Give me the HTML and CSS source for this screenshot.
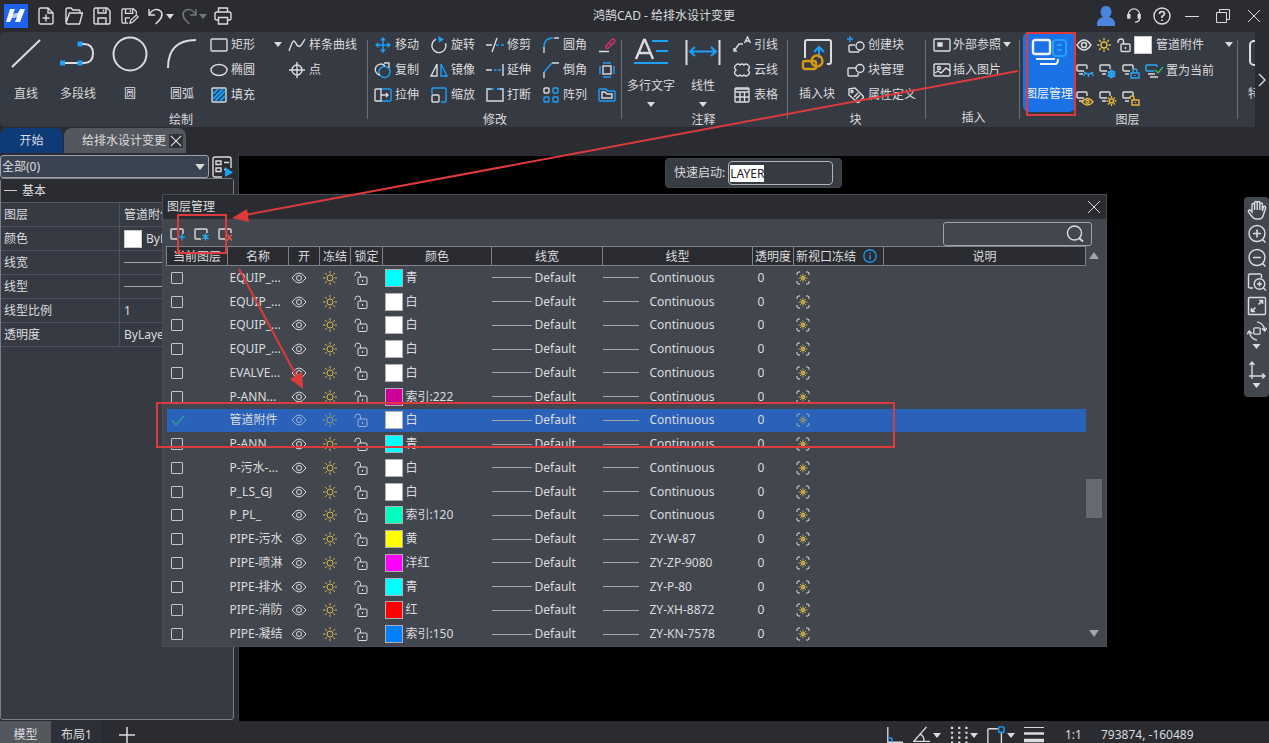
FILE: index.html
```html
<!DOCTYPE html>
<html lang="zh-CN">
<head>
<meta charset="utf-8">
<title>鸿鹄CAD - 给排水设计变更</title>
<link rel="stylesheet" href="styles.css">
</head>
<body>
<svg class="sprite" aria-hidden="true">
  <symbol id="caret" viewBox="0 0 8 5"><path d="M0 0h8L4 5z" fill="currentColor"/></symbol>
  <symbol id="caret-up" viewBox="0 0 10 7"><path d="M0 7h10L5 0z" fill="currentColor"/></symbol>
  <symbol id="close" viewBox="0 0 14 14"><path d="M1 1l12 12M13 1L1 13"/></symbol>
  <symbol id="new" viewBox="0 0 18 18"><path d="M11 1H3.500Q2 1 2 2.500v13Q2 17 3.500 17h11q1.500 0 1.500-1.500V6zM11 1v5h5M9 7.500v7M5.500 11h7"/></symbol>
  <symbol id="open" viewBox="0 0 18 18"><path d="M1 15V2.500Q1 1 2.500 1H6l2 2h6q1 0 1 1v2M1 16L4.500 6H17.500L14.500 17H2.500Q1 17 1 15.500"/></symbol>
  <symbol id="save" viewBox="0 0 18 18"><path d="M2.500 1H14l3 3v11.500q0 1.500-1.500 1.500h-13Q1 17 1 15.500v-13Q1 1 2.500 1zM5 1v5h8V1M5 17v-6h8v6M10.500 2.500v2"/></symbol>
  <symbol id="saveas" viewBox="0 0 20 18"><path d="M8 17H2.500Q1 17 1 15.500v-13Q1 1 2.500 1H14l3 3v3M5 1v5h8V1M5 17v-6h5M10.500 2.500v2M10 17l.7-3.300L17 8l2 2-6 6z"/></symbol>
  <symbol id="undo" viewBox="0 0 16 18"><path d="M1 2v6h6M1.500 7.500C4 2 10 1 13 4.500c3 4-.5 8-5.500 12.500"/></symbol>
  <symbol id="redo" viewBox="0 0 16 18"><path d="M15 2v6H9M14.500 7.500C12 2 6 1 3 4.500c-3 4 .5 8 5.500 12.500"/></symbol>
  <symbol id="print" viewBox="0 0 18 18"><path d="M4.500 5V1h9v4M4.500 13H2.500Q1 13 1 11.500V7q0-2 2-2h12q2 0 2 2v4.500q0 1.500-1.500 1.500h-2M4.500 10.500h9V17h-9z"/></symbol>
  <symbol id="user" viewBox="0 0 18 20"><path d="M9 0a5.500 6 0 0 1 3 11q5 1 6 6v3H0v-3q1-5 6-6A5.500 6 0 0 1 9 0z" fill="#4c86dc" stroke="none"/></symbol>
  <symbol id="headset" viewBox="0 0 16 17"><path d="M2 9V7a6 6 0 0 1 12 0v2M14 11q0 4-5 4"/><path d="M2.500 6.500v5M13.500 6.500v5" stroke-width="3.500"/></symbol>
  <symbol id="help" viewBox="0 0 18 18"><circle cx="9" cy="9" r="8"/><path d="M6.500 7q0-2.500 2.500-2.500T11.500 7Q11.500 8 9 9.500V11M9 12.500v1.500" stroke-width="1.700"/></symbol>
  <symbol id="min" viewBox="0 0 14 14"><path d="M0 7.500h14"/></symbol>
  <symbol id="restore" viewBox="0 0 14 14"><path d="M.5 3.500h10v10H.5zM3.500 3V.5h10v10H11"/></symbol>

  <symbol id="line" viewBox="0 0 36 36"><path d="M4 31L32 4" stroke-width="2"/></symbol>
  <symbol id="pline" viewBox="0 0 36 36"><path d="M3 27h21q9 0 9-9.500T24 8h-4" stroke-width="2"/><path d="M0 24.500h5v5H0zM17.500 24.500h5v5h-5zM17.500 5.500h5v5h-5z" fill="#1da0fa" stroke="none"/></symbol>
  <symbol id="circle" viewBox="0 0 36 36"><circle cx="18" cy="18" r="16.500" stroke-width="2"/></symbol>
  <symbol id="arc" viewBox="0 0 36 36"><path d="M4 32Q4 4 32 4" stroke-width="2"/></symbol>
  <symbol id="rect" viewBox="0 0 18 18"><rect x="1" y="3" width="16" height="12" rx="1"/></symbol>
  <symbol id="ellipse" viewBox="0 0 18 18"><ellipse cx="9" cy="9" rx="8" ry="5.500"/></symbol>
  <symbol id="hatch" viewBox="0 0 18 18"><rect x="2" y="2" width="14" height="14" rx="1" fill="#25415b"/><path d="M3 8l5-5M3 13L13 3M5 15L15 5M10 15l5-5" stroke="#1da0fa" stroke-width="1.800"/></symbol>
  <symbol id="spline" viewBox="0 0 18 18"><path d="M1 15C6 0 6 5 9 9s5-1 8-6"/></symbol>
  <symbol id="point" viewBox="0 0 18 18"><circle cx="9" cy="9" r="5"/><path d="M9 1v16M1 9h16"/></symbol>
  <symbol id="move" viewBox="0 0 18 18"><g stroke="#1da0fa" fill="#1da0fa"><path d="M9 3v12M3 9h12"/><path d="M9 1L6 4.500h6zM9 17l-3-3.500h6zM1 9l3.500-3v6zM17 9l-3.500-3v6z" stroke="none"/></g></symbol>
  <symbol id="rotate" viewBox="0 0 18 18"><path d="M6 3.200a7 7 0 1 0 9.500 4"/><path d="M8 0l6 3.500-5 3z" fill="#1da0fa" stroke="none"/></symbol>
  <symbol id="trim" viewBox="0 0 18 18"><path d="M0 9h6M11 2L6 16"/><path d="M10 9h3M15 9h3" stroke="#1da0fa"/></symbol>
  <symbol id="fillet" viewBox="0 0 18 18"><path d="M2 17v-6M12 2h5"/><path d="M2 11q0-9 9-9" stroke="#1da0fa"/></symbol>
  <symbol id="erase" viewBox="0 0 18 18"><path d="M1 15.500h10"/><path d="M8 10l6-6.500q1-1 2 0l.5.500q1 1 0 2L10.500 12q-1 1-2 0l-.5-.5q-.5-.5 0-1.500zM11 7l3 2.500" stroke="#d6336c"/></symbol>
  <symbol id="copy" viewBox="0 0 18 18"><circle cx="10.500" cy="11" r="5.500" stroke="#1da0fa"/><path d="M6 14A5.500 5.500 0 1 1 11 5M10 2h5v5"/></symbol>
  <symbol id="mirror" viewBox="0 0 18 18"><path d="M7 3v12H1z"/><path d="M11 3v12h6z" stroke="#1da0fa"/></symbol>
  <symbol id="extend" viewBox="0 0 18 18"><path d="M0 9h6M17 3v12"/><path d="M8 9h2.500M12 9h3" stroke="#1da0fa"/></symbol>
  <symbol id="chamfer" viewBox="0 0 18 18"><path d="M2 17v-6M10 2h7"/><path d="M2 11l8-9" stroke="#1da0fa"/></symbol>
  <symbol id="offset" viewBox="0 0 18 18"><rect x="5" y="5" width="8" height="8"/><path d="M5 2h8M5 16h8M2 5v8M16 5v8" stroke="#1da0fa"/></symbol>
  <symbol id="stretch" viewBox="0 0 18 18"><path d="M7 3h9q1 0 1 1v10q0 1-1 1H7" stroke="#1da0fa"/><path d="M7 3v12H2q-1 0-1-1V4q0-1 1-1zM7 9h7M12 7l2 2-2 2"/></symbol>
  <symbol id="scale" viewBox="0 0 18 18"><path d="M2 8V3q0-1 1-1h12q1 0 1 1v12q0 1-1 1h-4" stroke="#1da0fa"/><rect x="2" y="9" width="7" height="7" rx="1"/></symbol>
  <symbol id="break" viewBox="0 0 18 18"><path d="M5 3H1v12h16V3h-3"/><path d="M5 3h2.500M11 3h3" stroke="#1da0fa" stroke-width="2"/></symbol>
  <symbol id="array" viewBox="0 0 18 18"><rect x="2" y="2" width="5" height="5" rx="1"/><g stroke="#1da0fa"><rect x="11" y="2" width="5" height="5" rx="1"/><rect x="2" y="11" width="5" height="5" rx="1"/><rect x="11" y="11" width="5" height="5" rx="1"/></g></symbol>
  <symbol id="region" viewBox="0 0 18 18"><path d="M2 3h6l2 2h6q1 0 1 1v8q0 1-1 1H2q-1 0-1-1V4q0-1 1-1z" stroke="#1da0fa"/><path d="M4 6h3l2 2h5v4H4z"/></symbol>
  <symbol id="mtext" viewBox="0 0 36 36"><path d="M3 23L11 4h1l8 19M6 17h11" stroke-width="2.400"/><path d="M19 5h16M23 15h12M1 27h34" stroke="#1da0fa" stroke-width="2"/></symbol>
  <symbol id="dim" viewBox="0 0 36 36"><path d="M1.500 4v25M34.500 4v25" stroke-width="2"/><path d="M6 15.500h24M10 11l-5 4.500 5 4.500M26 11l5 4.500-5 4.500" stroke="#1da0fa" stroke-width="2"/></symbol>
  <symbol id="leader" viewBox="0 0 18 18"><path d="M1 15l5-7h4M11.500 7L14.500 1l3 6M12.500 5h4M1 12v3h3"/></symbol>
  <symbol id="cloud" viewBox="0 0 18 18"><path d="M3 4q2-2 4 0 2-2 4 0 2-2 4 0 3 2 0 5 3 3 0 5-2 2-4 0-2 2-4 0-2 2-4 0-3-2 0-5-3-3 0-5z"/></symbol>
  <symbol id="table" viewBox="0 0 18 18"><rect x="2" y="2" width="14" height="14" rx="1"/><path d="M2 6h14M2 11h14M7 6v10M11.500 6v10M2 3h14"/></symbol>
  <symbol id="insblock" viewBox="0 0 36 36"><path d="M6 22V6q0-2 2-2h22q2 0 2 2v20q0 2-2 2h-2" stroke-width="2"/><path d="M20 22V12M15 16l5-5 5 5" stroke="#1da0fa" stroke-width="2"/><g stroke="#d49a12" stroke-width="2.400"><rect x="4" y="25" width="13" height="8" rx="2"/><circle cx="18" cy="25" r="5.500"/></g></symbol>
  <symbol id="mkblock" viewBox="0 0 18 18"><path d="M8 9H3q-1 0-1 1v5q0 1 1 1h8q1 0 1-1v-1"/><circle cx="13" cy="10" r="4"/><path d="M3 0v6M0 3h6" stroke="#1da0fa"/></symbol>
  <symbol id="block" viewBox="0 0 18 18"><path d="M9 7H2Q1 7 1 8v6q0 1 1 1h8q1 0 1-1v-2"/><circle cx="13" cy="7.500" r="4"/></symbol>
  <symbol id="tag" viewBox="0 0 18 18"><path d="M2 3l6-1 8 8q1 1 0 2l-4 4q-1 1-2 0L2 9zM7 11l4-4M9 13l4-4"/><circle cx="5" cy="5.500" r="1"/></symbol>
  <symbol id="xref" viewBox="0 0 18 18"><rect x="1" y="3" width="16" height="12" rx="1"/><path d="M5 7h4v3H5z" fill="currentColor"/></symbol>
  <symbol id="image" viewBox="0 0 18 18"><rect x="1" y="3" width="16" height="12" rx="1"/><circle cx="6" cy="7" r="1.500"/><path d="M2 12l3-2 3 2 5-5 4 3"/></symbol>
  <symbol id="layers" viewBox="0 0 36 36"><rect x="2" y="4" width="17" height="14" rx="2" stroke-width="2.400"/><path d="M5 23h19M9 28h16q2-1 2-5" stroke-width="2"/><rect x="22" y="4" width="13" height="16" rx="3" stroke="#22a2ff" stroke-width="2"/><path d="M26 9h5M26 14h5" stroke="#22a2ff" stroke-width="2"/></symbol>
  <symbol id="prop-card" viewBox="0 0 36 36"><rect x="2" y="5" width="30" height="24" rx="4" stroke-width="2"/></symbol>
  <symbol id="eye" viewBox="0 0 16 16"><path d="M1 8q7-10 14 0-7 10-14 0z"/><circle cx="8" cy="8" r="2.500"/></symbol>
  <symbol id="sun" viewBox="0 0 16 16"><circle cx="8" cy="8" r="3"/><path d="M8 1v2.500M8 12.500V15M1 8h2.500M12.500 8H15M3 3l1.800 1.800M11.200 11.200L13 13M3 13l1.800-1.800M11.200 4.800L13 3"/></symbol>
  <symbol id="unlock" viewBox="0 0 16 16"><rect x="5" y="7" width="9" height="7.500" rx="1"/><path d="M7.500 7V4.500Q7.500 2 5 2T2 4.500V6M9.500 10v2"/></symbol>
  <symbol id="lyr" viewBox="0 0 18 18"><path d="M8 9H2Q1 9 1 8V4q0-1 1-1h8q1 0 1 1v3M3 12h4"/></symbol>
  <symbol id="lyr-hide" viewBox="0 0 18 18"><use href="#lyr"/><path d="M8 10q5 4 9 0M9 11.500L7.500 14M12.500 12v3M16 11.500l1.500 2.500" stroke="#29a9f5"/></symbol>
  <symbol id="lyr-freeze" viewBox="0 0 18 18"><use href="#lyr"/><path d="M12.500 7.500v9M8.500 9.700l8 4.600M8.500 14.300l8-4.600" stroke="#29a9f5"/><circle cx="12.500" cy="12" r="3" stroke="#29a9f5"/></symbol>
  <symbol id="lyr-lock" viewBox="0 0 18 18"><use href="#lyr"/><path d="M9 11h8v5H9zM11 11V9q0-2 2-2t2 2v2M13 13v1" stroke="#29a9f5"/></symbol>
  <symbol id="lyr-set" viewBox="0 0 18 18"><path d="M3 12h7M5 15h8"/><path d="M9 9H2Q1 9 1 8V4q0-1 1-1h9q1 0 1 1v1" stroke="#29a9f5"/><path d="M10 8l3 3 5-6" stroke="#2fc45b"/></symbol>
  <symbol id="lyr-show" viewBox="0 0 18 18"><use href="#lyr"/><path d="M6 13q5.500-7 11 0-5.500 6-11 0z" stroke="#e2b93b"/><circle cx="11.500" cy="12.800" r="1.500" stroke="#e2b93b"/></symbol>
  <symbol id="lyr-thaw" viewBox="0 0 18 18"><use href="#lyr"/><g stroke="#e2b93b"><circle cx="12.500" cy="12" r="2"/><path d="M12.500 7v2M12.500 15v2M7.500 12h2M15.500 12h2M9 8.500l1.500 1.500M16 15.500L14.500 14M16 8.500L14.500 10M9 15.500l1.500-1.500"/></g></symbol>
  <symbol id="lyr-unlock" viewBox="0 0 18 18"><use href="#lyr"/><path d="M10 11h7v5h-7zM12 11V9q0-2-2-2T8 9v1M13.500 13v1" stroke="#e2b93b"/></symbol>
  <symbol id="props" viewBox="0 0 22 22"><path d="M10 21H3q-2 0-2-2V3q0-2 2-2h14q2 0 2 2v9" stroke-width="1.400"/><path d="M4 5h5v3.500H4zM4 12h5v3.500H4zM12 6.500h5M12 13.500h2"/><path d="M13 11l8 5.500-8 4.500z" fill="#1da0fa" stroke="none"/></symbol>
  <symbol id="tl-new" viewBox="0 0 16 16"><path d="M8 13H3q-1 0-1-1V4q0-1 1-1h10q1 0 1 1v4"/><path d="M13 7.500v7M9.500 11h7" stroke="#1da0fa" stroke-width="1.400"/></symbol>
  <symbol id="tl-frz" viewBox="0 0 16 16"><path d="M8 13H3q-1 0-1-1V4q0-1 1-1h10q1 0 1 1v3"/><path d="M12.500 7.500v7M9.500 9l6 4M15.500 9l-6 4" stroke="#29b0f5"/></symbol>
  <symbol id="tl-del" viewBox="0 0 16 16"><path d="M8 13H3q-1 0-1-1V4q0-1 1-1h10q1 0 1 1v3"/><path d="M10 8.500l5 6M15 8.500l-5 6" stroke="#d9634c"/></symbol>
  <symbol id="search" viewBox="0 0 18 18"><circle cx="8.500" cy="8" r="7"/><path d="M13 13l4 3.500" stroke-width="1.800"/></symbol>
  <symbol id="info" viewBox="0 0 14 14"><circle cx="7" cy="7" r="6.200" stroke="#1f93e0"/><path d="M7 6v4.500M7 3.500V5" stroke="#1f93e0" stroke-width="1.400"/></symbol>
  <symbol id="check" viewBox="0 0 14 14"><path d="M1 7l4 5 8-9" stroke="#2f9f8d" stroke-width="1.300"/></symbol>
  <symbol id="vp" viewBox="0 0 14 14"><path d="M4 1H2L1 2v2M10 1h2l1 1v2M4 13H2l-1-1v-2M10 13h2l1-1v-2"/><g stroke="#c0a446"><circle cx="7" cy="7" r="1.800"/><path d="M7 2.500v9M2.500 7h9M4 4l6 6M10 4l-6 6"/></g></symbol>
  <symbol id="hand" viewBox="0 0 20 20"><path d="M5 12V5q0-1.500 1.300-1.500T7.600 5v5V3q0-1.500 1.300-1.500T10.200 3v7V3q0-1.500 1.300-1.500T12.800 3v7V4.500Q12.800 3 14.100 3t1.300 1.500V11l1-4q.6-1 1.800-.5.800.5.300 2L16 16q-1 3-4 3H9q-2 0-4-2.500L1.500 12Q1 10.500 2.200 10q1-.2 2 1z" stroke-width="1.400"/></symbol>
  <symbol id="zin" viewBox="0 0 20 20"><circle cx="10" cy="9.500" r="8"/><path d="M15.500 15.500l3 3M10 5.500v8M6 9.500h8" stroke-width="1.600"/></symbol>
  <symbol id="zout" viewBox="0 0 20 20"><circle cx="10" cy="9.500" r="8"/><path d="M15.500 15.500l3 3M6 9.500h8" stroke-width="1.600"/></symbol>
  <symbol id="zwin" viewBox="0 0 20 20"><path d="M6 16H3q-1.500 0-1.500-1.500v-11Q1.500 2 3 2h10q1.500 0 1.500 1.500V6"/><circle cx="12.500" cy="12" r="5.300"/><path d="M16.500 16l2.500 2.500M12.500 9.500v5M10 12h5" stroke-width="1.400"/></symbol>
  <symbol id="zext" viewBox="0 0 20 20"><rect x="1.500" y="1.500" width="17" height="17" rx="1"/><path d="M11.500 8.500l4-4M12 4.500h3.500V8M8.500 11.500l-4 4M4.500 12v3.500H8" stroke-width="1.600"/></symbol>
  <symbol id="orbit" viewBox="0 0 22 22"><rect x="7.500" y="7.500" width="7" height="7" rx="1"/><path d="M11 1q7 1 8.500 9M16.500 8l3 3 2.500-3.500M11 21Q4 20 2.500 12M0 14.500L2.500 11l3.500 3" stroke-width="1.500"/></symbol>
  <symbol id="ucs" viewBox="0 0 20 20"><path d="M5 2v14h13M2.500 5L5 2l2.500 3M15 13.500l3 2.500-3 2.500M5 13v6M2 16h3" stroke-width="1.400"/></symbol>
  <symbol id="ortho" viewBox="0 0 20 20"><path d="M2 1v17h17" stroke-width="1.500"/><path d="M2.500 13.500h4V18" stroke="#1da0fa" stroke-width="1.600"/></symbol>
  <symbol id="polar" viewBox="0 0 20 20"><path d="M15 1L1 17h18M8 9q5 3 4 8" stroke-width="1.500"/></symbol>
  <symbol id="grid" viewBox="0 0 20 20"><path d="M1 2h2.500M9 2h2.500M17 2h2.500M1 7.500h2.500M9 7.500h2.500M17 7.500h2.500M1 13h2.500M9 13h2.500M17 13h2.500M1 18.500h2.500M9 18.500h2.500M17 18.500h2.500" stroke-width="2.400"/></symbol>
  <symbol id="osnap" viewBox="0 0 20 20"><path d="M1 19V4q0-1 1-1h10M16 7v12" stroke-width="1.500"/><rect x="13" y="1" width="6" height="6" rx="1" stroke="#1da0fa" stroke-width="1.600"/></symbol>
  <symbol id="weight" viewBox="0 0 20 20"><path d="M0 2.500h20" stroke-width="1"/><path d="M0 8.500h20" stroke-width="2.500"/><path d="M0 15.500h20" stroke-width="3.500"/></symbol>
  <symbol id="plus" viewBox="0 0 16 16"><path d="M8 0v16M0 8h16" stroke-width="1.500"/></symbol>
</svg>

<header class="titlebar">
  <nav class="quick" aria-label="快速访问">
    <svg class="logo" viewBox="0 0 24 24" role="img" aria-label="鸿鹄CAD"><rect width="24" height="24" fill="#1d63f0"/><path d="M6 5h5l-2 5 5-1 2-4h5l-5 13h-5l2-5-5 1-2 4H2z" fill="#fff"/><path d="M9 10l5-1-1 4-5 1z" fill="#a9cbff"/></svg>
    <button aria-label="新建"><svg><use href="#new"/></svg></button>
    <button aria-label="打开"><svg><use href="#open"/></svg></button>
    <button aria-label="保存"><svg><use href="#save"/></svg></button>
    <button aria-label="另存为"><svg><use href="#saveas"/></svg></button>
    <button class="split" aria-label="撤销"><svg><use href="#undo"/></svg><svg class="caret"><use href="#caret"/></svg></button>
    <button class="split off" aria-label="重做"><svg><use href="#redo"/></svg><svg class="caret"><use href="#caret"/></svg></button>
    <button class="narrow" aria-label="打印"><svg><use href="#print"/></svg></button>
  </nav>
  <h1>鸿鹄CAD - 给排水设计变更</h1>
  <div class="window-tools">
    <button class="narrow" aria-label="用户"><svg class="person"><use href="#user"/></svg></button>
    <button class="narrow" aria-label="客服"><svg class="ic16"><use href="#headset"/></svg></button>
    <button class="narrow" aria-label="帮助"><svg><use href="#help"/></svg></button>
    <button aria-label="最小化"><svg class="ic14"><use href="#min"/></svg></button>
    <button aria-label="还原"><svg class="ic14"><use href="#restore"/></svg></button>
    <button aria-label="关闭"><svg class="ic14"><use href="#close"/></svg></button>
  </div>
</header>

<section class="ribbon">
  <div class="group draw">
    <div class="tools">
      <button class="large"><svg><use href="#line"/></svg><span>直线</span></button>
      <button class="large"><svg><use href="#pline"/></svg><span>多段线</span></button>
      <button class="large"><svg><use href="#circle"/></svg><span>圆</span></button>
      <button class="large"><svg><use href="#arc"/></svg><span>圆弧</span></button>
      <div class="stack wide">
        <button class="small spread"><svg><use href="#rect"/></svg>矩形<svg class="caret"><use href="#caret"/></svg></button>
        <button class="small"><svg><use href="#ellipse"/></svg>椭圆</button>
        <button class="small"><svg><use href="#hatch"/></svg>填充</button>
      </div>
      <div class="stack">
        <button class="small"><svg><use href="#spline"/></svg>样条曲线</button>
        <button class="small"><svg><use href="#point"/></svg>点</button>
      </div>
    </div>
    <h2>绘制</h2>
  </div>
  <div class="group modify">
    <div class="tools">
      <div class="stack col"><button class="small"><svg><use href="#move"/></svg>移动</button><button class="small"><svg><use href="#copy"/></svg>复制</button><button class="small"><svg><use href="#stretch"/></svg>拉伸</button></div>
      <div class="stack col"><button class="small"><svg><use href="#rotate"/></svg>旋转</button><button class="small"><svg><use href="#mirror"/></svg>镜像</button><button class="small"><svg><use href="#scale"/></svg>缩放</button></div>
      <div class="stack col"><button class="small"><svg><use href="#trim"/></svg>修剪</button><button class="small"><svg><use href="#extend"/></svg>延伸</button><button class="small"><svg><use href="#break"/></svg>打断</button></div>
      <div class="stack col"><button class="small"><svg><use href="#fillet"/></svg>圆角</button><button class="small"><svg><use href="#chamfer"/></svg>倒角</button><button class="small"><svg><use href="#array"/></svg>阵列</button></div>
      <div class="stack"><button class="small" aria-label="删除"><svg><use href="#erase"/></svg></button><button class="small" aria-label="偏移"><svg><use href="#offset"/></svg></button><button class="small" aria-label="面域"><svg><use href="#region"/></svg></button></div>
    </div>
    <h2>修改</h2>
  </div>
  <div class="group annotate">
    <div class="tools">
      <button class="large drop"><svg><use href="#mtext"/></svg><span>多行文字</span><svg class="caret"><use href="#caret"/></svg></button>
      <button class="large drop"><svg><use href="#dim"/></svg><span>线性</span><svg class="caret"><use href="#caret"/></svg></button>
      <div class="stack"><button class="small"><svg><use href="#leader"/></svg>引线</button><button class="small"><svg><use href="#cloud"/></svg>云线</button><button class="small"><svg><use href="#table"/></svg>表格</button></div>
    </div>
    <h2>注释</h2>
  </div>
  <div class="group blocks">
    <div class="tools">
      <button class="large"><svg><use href="#insblock"/></svg><span>插入块</span></button>
      <div class="stack"><button class="small"><svg><use href="#mkblock"/></svg>创建块</button><button class="small"><svg><use href="#block"/></svg>块管理</button><button class="small"><svg><use href="#tag"/></svg>属性定义</button></div>
    </div>
    <h2>块</h2>
  </div>
  <div class="group insert">
    <div class="tools">
      <div class="stack"><button class="small"><svg><use href="#xref"/></svg>外部参照<svg class="caret"><use href="#caret"/></svg></button><button class="small"><svg><use href="#image"/></svg>插入图片</button></div>
    </div>
    <h2>插入</h2>
  </div>
  <div class="group layer">
    <div class="tools">
      <button class="large active"><svg><use href="#layers"/></svg><span>图层管理</span></button>
      <div class="layer-rows">
        <button class="layer-pick"><svg class="ic16"><use href="#eye"/></svg><svg class="ic16 gold"><use href="#sun"/></svg><svg class="ic16"><use href="#unlock"/></svg><i class="swatch"></i><span>管道附件</span><svg class="caret"><use href="#caret"/></svg></button>
        <div class="icon-row"><button aria-label="隐藏图层"><svg><use href="#lyr-hide"/></svg></button><button aria-label="冻结图层"><svg><use href="#lyr-freeze"/></svg></button><button aria-label="锁定图层"><svg><use href="#lyr-lock"/></svg></button><button class="small"><svg><use href="#lyr-set"/></svg>置为当前</button></div>
        <div class="icon-row"><button aria-label="显示图层"><svg><use href="#lyr-show"/></svg></button><button aria-label="解冻图层"><svg><use href="#lyr-thaw"/></svg></button><button aria-label="解锁图层"><svg><use href="#lyr-unlock"/></svg></button></div>
      </div>
    </div>
    <h2>图层</h2>
  </div>
  <div class="group more">
    <button class="large"><svg><use href="#prop-card"/></svg><span>特</span></button>
  </div>
  <button class="ribbon-next" aria-label="更多"><svg viewBox="0 0 8 14"><path d="M1 1l6 6-6 6"/></svg></button>
</section>

<nav class="doc-tabs">
  <button class="home">开始</button>
  <button class="doc">给排水设计变更<span class="x"><svg><use href="#close"/></svg></span></button>
</nav>

<main>
  <aside class="props">
    <div class="picker">
      <label class="select"><select aria-label="选择对象"><option>全部(0)</option></select><svg class="caret"><use href="#caret"/></svg></label>
      <button aria-label="快速选择"><svg><use href="#props"/></svg></button>
    </div>
    <section class="sheet">
      <h3><span class="dash"></span>基本</h3>
      <dl>
        <dt>图层</dt><dd>管道附件</dd>
        <dt>颜色</dt><dd><i class="swatch"></i>ByLayer</dd>
        <dt>线宽</dt><dd><span class="rule"></span></dd>
        <dt>线型</dt><dd><span class="rule"></span></dd>
        <dt>线型比例</dt><dd>1</dd>
        <dt>透明度</dt><dd>ByLayer</dd>
      </dl>
    </section>
  </aside>
  <div class="canvas">
    <div class="launch"><label for="cmd">快速启动:</label><input id="cmd" type="text" value="LAYER"></div>
    <div class="viewbar">
      <button aria-label="平移"><svg><use href="#hand"/></svg></button>
      <button aria-label="放大"><svg><use href="#zin"/></svg></button>
      <button aria-label="缩小"><svg><use href="#zout"/></svg></button>
      <button aria-label="窗口缩放"><svg><use href="#zwin"/></svg></button>
      <button aria-label="范围缩放"><svg><use href="#zext"/></svg></button>
      <button class="tall" aria-label="动态观察"><svg><use href="#orbit"/></svg><svg class="caret"><use href="#caret"/></svg></button>
      <button class="tall" aria-label="坐标系"><svg><use href="#ucs"/></svg><svg class="caret"><use href="#caret"/></svg></button>
    </div>
  </div>
</main>

<section class="dialog" role="dialog" aria-labelledby="dlg-title">
  <header><h2 id="dlg-title">图层管理</h2><button aria-label="关闭"><svg class="ic14"><use href="#close"/></svg></button></header>
  <div class="dialog-tools">
    <button aria-label="新建图层"><svg class="ic16"><use href="#tl-new"/></svg></button>
    <button aria-label="新建冻结图层"><svg class="ic16"><use href="#tl-frz"/></svg></button>
    <button aria-label="删除图层"><svg class="ic16"><use href="#tl-del"/></svg></button>
    <div class="find"><input type="text" aria-label="搜索图层"><svg><use href="#search"/></svg></div>
  </div>
  <div class="dialog-body">
    <table>
      <colgroup><col class="w61"><col class="w61"><col class="w31"><col class="w31"><col class="w32"><col class="w109"><col class="w111"><col class="w150"><col class="w41"><col class="w90"><col></colgroup>
      <thead><tr><th>当前图层</th><th>名称</th><th>开</th><th>冻结</th><th>锁定</th><th>颜色</th><th>线宽</th><th>线型</th><th>透明度</th><th><span class="with-info">新视口冻结<svg><use href="#info"/></svg></span></th><th>说明</th></tr></thead>
      <tbody id="rows"></tbody>
    </table>
    <div class="scroll"><svg><use href="#caret-up"/></svg><span class="before"></span><span class="thumb"></span><span class="after"></span><svg class="down"><use href="#caret-up"/></svg></div>
  </div>
</section>

<footer class="status">
  <button class="sheet-tab on">模型</button>
  <button class="sheet-tab">布局1</button>
  <button class="add" aria-label="新建布局"><svg class="ic16"><use href="#plus"/></svg></button>
  <div class="modes">
    <button aria-label="正交"><svg><use href="#ortho"/></svg></button>
    <button aria-label="极轴"><svg><use href="#polar"/></svg><svg class="caret"><use href="#caret"/></svg></button>
    <button aria-label="栅格"><svg><use href="#grid"/></svg><svg class="caret"><use href="#caret"/></svg></button>
    <button aria-label="对象捕捉"><svg><use href="#osnap"/></svg><svg class="caret"><use href="#caret"/></svg></button>
    <button aria-label="线宽"><svg class="ic20"><use href="#weight"/></svg></button>
  </div>
  <span class="ratio">1:1</span>
  <span class="coords">793874, -160489</span>
</footer>

<svg class="marks" aria-hidden="true">
  <rect x="1027" y="33" width="48" height="82"/>
  <rect x="178" y="215" width="48" height="38"/>
  <rect x="157" y="403" width="737" height="44"/>
  <path d="M1018 71L245 215M239 269l58 108"/>
  <path class="head" d="M232 218l15-9 2 13zM303 389l-13-10 12-7z"/>
</svg>
<script src="script.js"></script>
</body>
</html>
```

FILE: styles.css
```css
* { box-sizing: border-box; }
body {
  margin: 0;
  height: 100vh;
  display: flex;
  flex-direction: column;
  overflow: hidden;
  background: #2a2c32;
  color: #dcdcde;
  font: 12px/16px "Noto Sans", "Noto Sans CJK SC", sans-serif;
}
button, input, select { font: inherit; color: inherit; }
button { background: none; border: 0; padding: 0; display: flex; align-items: center; justify-content: center; white-space: nowrap; }
h1, h2, h3, dl, dd { margin: 0; font-size: 12px; font-weight: 400; }
svg { width: 18px; height: 18px; flex: none; fill: none; stroke: currentColor; stroke-width: 1.4; display: block; }
.sprite { position: absolute; width: 0; height: 0; }
svg.caret { width: 8px; height: 5px; stroke: none; }
svg.ic16 { width: 16px; height: 16px; }
svg.ic14 { width: 14px; height: 14px; stroke-width: 1; }
.gold { color: #e0b84a; }
.swatch { width: 18px; height: 18px; flex: none; background: #fff; border: 1px solid #c9c9c9; }

/* Title bar */
.titlebar { display: flex; align-items: center; height: 32px; flex: none; }
.quick { display: flex; align-items: center; padding-left: 4px; }
.quick .logo { width: 24px; height: 24px; margin-right: 4px; stroke: none; }
.quick button { width: 28px; height: 28px; }
.quick .split { width: 33px; gap: 1px; }
.quick .narrow { width: 26px; }
.quick .off { color: #74767b; }
.titlebar h1 { flex: 1; text-align: center; }
.window-tools { display: flex; }
.window-tools button { width: 31px; height: 28px; }
.window-tools .narrow { width: 28px; }
.window-tools .person { height: 20px; }

/* Ribbon */
.ribbon { display: flex; flex: none; height: 95px; background: #363a43; border-radius: 6px 0 0 6px; overflow: hidden; }
.group { display: flex; flex-direction: column; position: relative; flex: none; }
.group:not(.more)::after { content: ""; position: absolute; right: 0; top: 8px; bottom: 8px; width: 1px; background: #6b6e75; }
.group h2 { text-align: center; margin-top: 4px; padding-right: 6px; line-height: 18px; }
.tools { display: flex; height: 75px; }
.draw { width: 368px; }
.modify { width: 254px; padding-left: 6px; }
.annotate { width: 166px; padding-left: 3px; }
.blocks { width: 138px; padding-left: 3px; }
.insert { width: 94px; padding-left: 7px; }
.layer { width: 218px; padding-left: 3px; }
.more { width: 17px; overflow: hidden; padding-left: 10px; }
.large { width: 52px; height: 75px; flex-direction: column; justify-content: flex-start; padding-top: 4px; }
.large svg { width: 36px; height: 36px; }
.large span { margin-top: 14px; }
.large.drop span { margin-top: 6px; }
.drop svg.caret { margin-top: 8px; width: 10px; height: 5px; }
.draw .stack { margin-left: 2px; }
.annotate .stack, .blocks .stack { margin-left: 4px; }
.stack { display: grid; grid-auto-rows: 25px; align-content: start; }
.stack.wide { width: 76px; }
.stack.col { width: 56px; }
.small { gap: 3px; justify-content: flex-start; }
.spread svg.caret { margin-left: auto; margin-right: 4px; }
.insert .small { gap: 2px; }
.large.active { height: 80px; flex: none; background: #1a72e6; border-radius: 6px; color: #f2f2f2; }
.layer-rows { display: grid; grid-template-rows: 25px 28px 26px; margin-left: 1px; flex: 1; align-content: start; }
.layer-pick { justify-content: flex-start; gap: 4px; }
.layer-pick .swatch { margin-left: -2px; }
.layer-pick svg.caret { margin-left: auto; margin-right: 5px; }
.icon-row { display: flex; gap: 5px; }
.more .large { align-items: flex-start; }
.ribbon-next { width: 15px; margin-left: auto; background: #2a2c32; }
.ribbon-next svg { width: 8px; height: 14px; }

/* Document tabs */
.doc-tabs { display: flex; flex: none; height: 27px; padding-top: 1px; gap: 1px; }
.doc-tabs button { border-radius: 8px 8px 0 0; height: 25px; }
.home { width: 63px; background: #0c3b78; }
.doc { width: 122px; padding-left: 15px; gap: 3px; background: #54575d; }
.doc .x { background: #2f3136; padding: 1px; }
.doc .x svg { width: 12px; height: 12px; }

/* Work area */
main { flex: 1; min-height: 0; display: grid; grid-template-columns: 239px 1fr; }
.props { display: flex; flex-direction: column; padding: 1px 4px 1px 0; border-right: 1px solid #3c3e44; }
.picker { display: flex; gap: 3px; height: 23px; flex: none; }
.picker button svg { width: 22px; height: 22px; }
.select { position: relative; display: block; flex: 1; }
.select select { appearance: none; width: 100%; height: 23px; padding: 0 1px; background: #3a4351; border: 1px solid #9fa1a6; border-radius: 3px; }
.select .caret { position: absolute; right: 4px; top: 9px; width: 10px; height: 6px; }
.sheet { flex: 1; background: #363a43; border: 1px solid #7b7e86; border-radius: 3px; }
.sheet h3 { display: flex; align-items: center; height: 24px; gap: 5px; padding-left: 3px; background: #2a2c32; border-bottom: 1px solid #565a66; }
.dash { width: 13px; height: 1px; background: #cfcfcf; }
.sheet dl { display: grid; grid-template-columns: 118px 1fr; grid-auto-rows: 24px; }
.sheet dt, .sheet dd { display: flex; align-items: center; padding-left: 3px; border-bottom: 1px solid #4d5260; gap: 4px; }
.sheet dd { padding-left: 4px; border-left: 1px solid #4d5260; }
.rule { flex: 1; height: 1px; background: #a4a6ab; }
.canvas { position: relative; background: #000; margin-top: 2px; }
.launch { position: absolute; left: 426px; top: 2px; display: flex; align-items: center; width: 177px; height: 30px; gap: 3px; padding: 0 8px; background: #373b44; border: 1px solid #44474e; border-radius: 4px; white-space: nowrap; }
.launch input { flex: 1; min-width: 0; height: 24px; padding: 0 1px; background: #363a43; border: 1px solid #b4b5b8; border-radius: 4px; outline: 0; }
.launch input::selection { background: #fff; color: #222; }
.viewbar { position: absolute; right: 0; top: 41px; width: 25px; padding: 1px 0; background: #42464f; border-radius: 4px; }
.viewbar button { width: 25px; height: 24px; }
.viewbar svg { width: 20px; height: 20px; }
.viewbar .tall { height: 39px; flex-direction: column; justify-content: flex-start; gap: 3px; padding-top: 3px; }
.viewbar svg.caret { width: 9px; height: 5px; }

/* Layer manager */
.dialog { position: absolute; left: 162px; right: 162px; top: 194px; height: 453px; display: flex; flex-direction: column; background: #42464f; border: 1px solid #4b4e55; }
.dialog header { display: flex; align-items: center; justify-content: space-between; height: 24px; flex: none; padding: 0 5px 0 4px; background: #2a2c32; }
.dialog-tools { display: flex; align-items: center; height: 27px; flex: none; padding: 3px 14px 0 6px; gap: 8px; }
.find { position: relative; margin-left: auto; }
.find input { display: block; width: 149px; height: 24px; background: #42464f; border: 1px solid #a0a2a6; border-radius: 3px; }
.find svg { position: absolute; right: 8px; top: 3px; }
.dialog-body { flex: 1; min-height: 0; display: flex; padding-left: 3px; }
table { flex: 1; height: 100%; table-layout: fixed; border-collapse: collapse; }
.w31 { width: 31px; } .w32 { width: 32px; } .w41 { width: 41px; } .w61 { width: 61px; } .w90 { width: 90px; }
.w109 { width: 109px; } .w111 { width: 111px; } .w150 { width: 150px; }
th { height: 19px; padding: 0; font-weight: 400; line-height: 17px; background: #2a2c32; border: 1px solid #7f8289; white-space: nowrap; }
td { padding: 0; white-space: nowrap; overflow: hidden; }
td:first-child { padding-left: 4px; }
td:nth-child(2) { padding-left: 2px; }
.with-info { display: flex; align-items: center; gap: 7px; padding-left: 2px; }
.with-info svg { width: 14px; height: 14px; }
td svg { margin-left: 2px; width: 16px; height: 16px; stroke-width: 1; }
td svg.vp, td svg.tick { width: 14px; height: 14px; }
td svg.tick { margin-left: 0; }
.cell { display: flex; align-items: center; gap: 3px; }
.color { padding-left: 2px; }
.color .swatch { border-color: #b0b0b0; }
.cell .stroke { width: 40px; height: 1px; background: #a4a6ab; }
.type .stroke { width: 36px; }
.type { gap: 11px; }
td:nth-child(9) { padding-left: 5px; }
td input { appearance: none; display: block; width: 12px; height: 12px; margin: 0; border: 1px solid #c4c5c8; border-radius: 1px; }
.selected td { background: #2a62b9; }
.selected svg { opacity: .65; }
.selected svg.tick { opacity: 1; }
.scroll { width: 20px; display: flex; flex-direction: column; align-items: flex-start; padding: 6px 0 9px; color: #a3a5a9; }
.scroll svg { width: 10px; height: 7px; margin-left: 3px; stroke: none; }
.scroll .down { transform: rotate(180deg); }
.scroll .thumb { width: 16px; height: 39px; background: #666a72; }
.before { flex: 220; }
.after { flex: 112; }

/* Status bar */
.status { display: flex; flex: none; height: 22px; overflow: hidden; align-items: flex-start; }
.status button { height: 28px; }
.sheet-tab { width: 51px; background: #2d3038; }
.sheet-tab.on { background: #54575d; }
.add { width: 50px; }
.modes { display: flex; gap: 9px; margin-left: auto; }
.modes button { gap: 2px; }
.modes svg.ic20 { width: 20px; height: 20px; }
.ratio { line-height: 28px; width: 36px; margin-left: 21px; }
.coords { line-height: 28px; width: 168px; }

.marks { position: absolute; left: 0; top: 0; width: 100%; height: 100%; pointer-events: none; stroke: #dd3a3c; stroke-width: 2; }
.marks .head { fill: #dd3a3c; stroke: none; }
```

FILE: script.js
```js
const layers = [
  ["EQUIP_...", "#00ffff", "青", "Continuous"],
  ["EQUIP_...", "#ffffff", "白", "Continuous"],
  ["EQUIP_...", "#ffffff", "白", "Continuous"],
  ["EQUIP_...", "#ffffff", "白", "Continuous"],
  ["EVALVE...", "#ffffff", "白", "Continuous"],
  ["P-ANN...", "#cc0099", "索引:222", "Continuous"],
  ["管道附件", "#ffffff", "白", "Continuous"],
  ["P-ANN...", "#00ffff", "青", "Continuous"],
  ["P-污水-...", "#ffffff", "白", "Continuous"],
  ["P_LS_GJ", "#ffffff", "白", "Continuous"],
  ["P_PL_", "#00ffbf", "索引:120", "Continuous"],
  ["PIPE-污水", "#ffff00", "黄", "ZY-W-87"],
  ["PIPE-喷淋", "#ff00ff", "洋红", "ZY-ZP-9080"],
  ["PIPE-排水", "#00ffff", "青", "ZY-P-80"],
  ["PIPE-消防", "#ff0000", "红", "ZY-XH-8872"],
  ["PIPE-凝结", "#0080ff", "索引:150", "ZY-KN-7578"]
];
const current = 6;
const icon = (id, cls = "") => `<svg class="${cls}"><use href="#${id}"/></svg>`;

document.getElementById("rows").innerHTML = layers.map(([name, hex, color, type], i) => `
  <tr class="${i === current ? "selected" : ""}">
    <td>${i === current ? icon("check", "tick") : `<input type="checkbox" aria-label="${name}">`}</td>
    <td>${name}</td>
    <td>${icon("eye")}</td>
    <td>${icon("sun", "gold")}</td>
    <td>${icon("unlock")}</td>
    <td><div class="cell color"><i class="swatch" style="background:${hex}"></i>${color}</div></td>
    <td><div class="cell"><span class="stroke"></span>Default</div></td>
    <td><div class="cell type"><span class="stroke"></span>${type}</div></td>
    <td>0</td>
    <td>${icon("vp", "vp")}</td>
    <td></td>
  </tr>`).join("");

const command = document.getElementById("cmd");
command.focus();
command.select();
```
